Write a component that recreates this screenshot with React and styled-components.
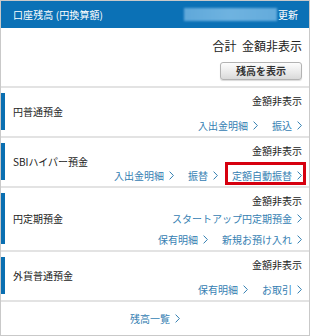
import React from "react";
import styled, { createGlobalStyle } from "styled-components";

const GlobalStyle = createGlobalStyle`
  html, body {
    margin: 0;
    padding: 0;
    background: #fff;
  }
  body {
    font-family: "Noto Sans CJK JP", "Noto Sans", sans-serif;
    color: #333;
  }
`;

const accounts = [
  {
    name: "円普通預金",
    rows: [["入出金明細", "振込"]],
  },
  {
    name: "SBIハイパー預金",
    rows: [["入出金明細", "振替", "定額自動振替"]],
    marked: "定額自動振替",
  },
  {
    name: "円定期預金",
    rows: [["スタートアップ円定期預金"], ["保有明細", "新規お預け入れ"]],
  },
  {
    name: "外貨普通預金",
    rows: [["保有明細", "お取引"]],
  },
];

const Chevron = () => (
  <svg width="5" height="9" viewBox="0 0 5 9">
    <polyline points="0.6,0.6 4.4,4.5 0.6,8.4" fill="none" stroke="currentColor" strokeWidth="1" />
  </svg>
);

const App = () => {
  return (
    <>
      <GlobalStyle />
      <Panel>
        <Header>
          <HeaderTitle>口座残高 (円換算額)</HeaderTitle>
          <Masked />
          <Refresh>更新</Refresh>
        </Header>
        <Summary>
          <Total>合計&nbsp;&nbsp;金額非表示</Total>
          <ShowButton>残高を表示</ShowButton>
        </Summary>
        {accounts.map((acc) => (
          <Card key={acc.name}>
            <Bar />
            <Name>{acc.name}</Name>
            <Right>
              <Amount>金額非表示</Amount>
              <Links>
                {acc.rows.map((row, i) => (
                  <LinkRow key={i}>
                    {row.map((label) => (
                      <Link key={label} $marked={acc.marked === label}>
                        {label}
                        <Chevron />
                      </Link>
                    ))}
                  </LinkRow>
                ))}
              </Links>
            </Right>
          </Card>
        ))}
        <Footer>
          <Link>
            残高一覧
            <Chevron />
          </Link>
        </Footer>
      </Panel>
    </>
  );
};

const Panel = styled.div`
  width: 310px;
  height: 336px;
  box-sizing: border-box;
  border: 1px solid #c9c9c9;
  background: #fff;
  display: flex;
  flex-direction: column;
  overflow: hidden;
`;

const Header = styled.div`
  height: 27px;
  flex-shrink: 0;
  display: flex;
  align-items: center;
  background: #0b71b6;
  color: #fff;
  padding: 0 11px 0 12px;
  font-size: 10px;
`;

const HeaderTitle = styled.span`
  letter-spacing: 0.1px;
`;

const Masked = styled.div`
  margin-left: auto;
  width: 93px;
  height: 13px;
  background: linear-gradient(90deg, #5fa8da, #6fb3e0 50%, #63abdc);
  filter: blur(0.8px);
`;

const Refresh = styled.span`
  margin-left: 1px;
`;

const Summary = styled.div`
  display: flex;
  flex-direction: column;
  align-items: flex-end;
  padding: 10px 7px 6px 0;
  border-bottom: 2px solid #e3e3e3;
`;

const Total = styled.div`
  font-size: 12px;
  line-height: 16px;
  color: #222;
`;

const ShowButton = styled.button`
  margin-top: 8px;
  width: 82px;
  height: 18px;
  padding: 0;
  border: 1px solid #b3b3b3;
  border-radius: 3px;
  background: linear-gradient(#fdfdfd, #e9e9e9 60%, #d9d9d9);
  box-shadow: 0 1px 1px rgba(0, 0, 0, 0.15);
  font-family: inherit;
  font-size: 10px;
  font-weight: bold;
  color: #333;
  line-height: 16px;
`;

const Card = styled.div`
  display: flex;
  box-sizing: border-box;
  min-height: 50px;
  flex-shrink: 0;
  padding: 6px 7px 0 0;
  border-bottom: 2px solid #e3e3e3;
`;

const Bar = styled.div`
  width: 4px;
  background: #0a6fb1;
  margin: -1px 0 6px;
  flex-shrink: 0;
`;

const Name = styled.div`
  align-self: center;
  margin-top: -6px;
  padding-left: 8px;
  font-size: 10px;
  line-height: 14px;
  color: #222;
  white-space: nowrap;
`;

const Right = styled.div`
  margin-left: auto;
  display: flex;
  flex-direction: column;
  align-items: flex-end;
`;

const Amount = styled.div`
  font-size: 10px;
  line-height: 14px;
  color: #222;
`;

const Links = styled.div`
  margin-top: auto;
  display: flex;
  flex-direction: column;
  align-items: flex-end;
`;

const LinkRow = styled.div`
  height: 21px;
  display: flex;
  align-items: center;
  gap: 14px;
`;

const Link = styled.span`
  position: relative;
  display: inline-flex;
  align-items: center;
  gap: 5px;
  font-size: 10px;
  line-height: 13px;
  color: #3580b2;
  white-space: nowrap;

  &::after {
    content: "";
    display: ${(p) => (p.$marked ? "block" : "none")};
    position: absolute;
    top: -7px;
    bottom: -3px;
    left: -7px;
    right: -4px;
    border: 3px solid #d6000f;
  }
`;

const Footer = styled.div`
  flex: 1;
  display: flex;
  align-items: center;
  justify-content: center;
`;

export default App;
